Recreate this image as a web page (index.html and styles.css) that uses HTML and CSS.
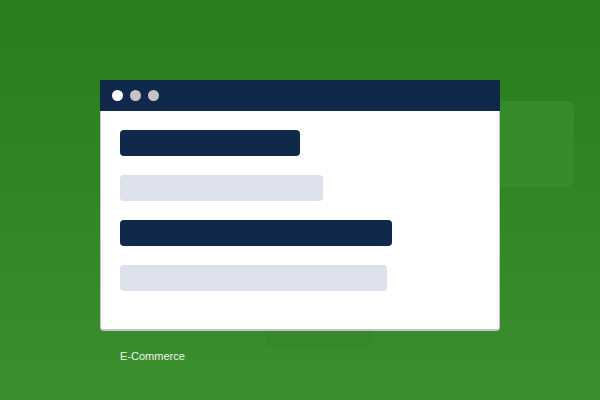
FILE: index.html
```html
<!DOCTYPE html>
<html>
<head>
<meta charset="utf-8">
<link rel="stylesheet" href="styles.css">
</head>
<body>
<div class="stage">
  <div class="back-card"></div>
  <div class="back-shadow"></div>
  <div class="window">
    <div class="titlebar">
      <span class="dot dot-white"></span>
      <span class="dot"></span>
      <span class="dot"></span>
    </div>
    <div class="content">
      <div class="bar bar-dark w180"></div>
      <div class="bar bar-light w203"></div>
      <div class="bar bar-dark w272"></div>
      <div class="bar bar-light w267"></div>
    </div>
  </div>
  <div class="caption">E-Commerce</div>
</div>
</body>
</html>
```
FILE: styles.css
```css
html, body {
  margin: 0;
  padding: 0;
}
body {
  width: 600px;
  height: 400px;
  overflow: hidden;
  background: linear-gradient(180deg, #2a7c1d 0%, #3b8f2f 100%);
  font-family: "Liberation Sans", Arial, sans-serif;
}
.stage {
  position: relative;
  width: 600px;
  height: 400px;
  box-sizing: border-box;
  padding: 80px 0 0 100px;
  display: flex;
  flex-direction: column;
}
.back-card {
  position: absolute;
  left: 440px;
  top: 101px;
  width: 134px;
  height: 86px;
  border-radius: 8px;
  background: #378b2c;
}
.back-shadow {
  position: absolute;
  left: 266px;
  top: 320px;
  width: 106px;
  height: 29px;
  border-radius: 8px;
  background: rgba(0, 0, 0, 0.025);
}
.window {
  position: relative;
  width: 400px;
  display: flex;
  flex-direction: column;
}
.titlebar {
  height: 31px;
  background: #10284a;
  display: flex;
  align-items: center;
  gap: 7px;
  padding-left: 12px;
}
.dot {
  width: 11px;
  height: 11px;
  border-radius: 50%;
  background: #c4c4c6;
}
.dot-white {
  background: #ffffff;
}
.content {
  background: #ffffff;
  border: 1px solid #c3c3cb;
  border-top: none;
  border-bottom-width: 2px;
  border-radius: 0 0 4px 4px;
  padding: 19px 19px 38px;
  display: flex;
  flex-direction: column;
  gap: 19px;
}
.bar {
  height: 26px;
  border-radius: 4px;
}
.bar-dark {
  background: #10284a;
}
.bar-light {
  background: #dde1eb;
}
.w180 { width: 180px; }
.w203 { width: 203px; }
.w272 { width: 272px; }
.w267 { width: 267px; }
.caption {
  margin-top: 19px;
  padding-left: 20px;
  font-size: 11px;
  line-height: 13px;
  color: #eef4ec;
}
```
